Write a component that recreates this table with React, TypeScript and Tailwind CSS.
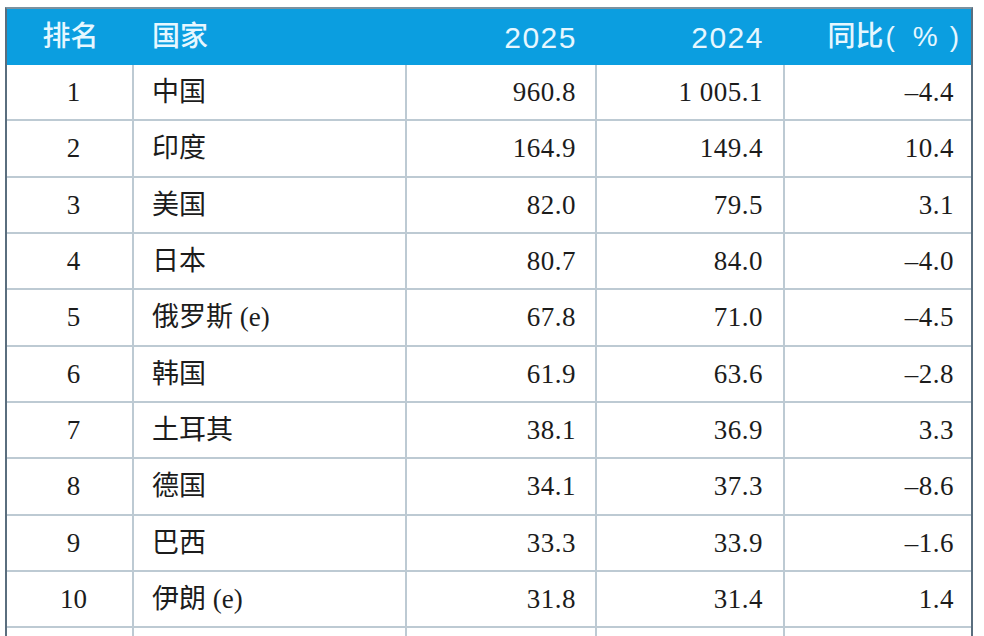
import React from "react";

const rows: [string, string, string, string, string][] = [
  ["1", "中国", "960.8", "1 005.1", "–4.4"],
  ["2", "印度", "164.9", "149.4", "10.4"],
  ["3", "美国", "82.0", "79.5", "3.1"],
  ["4", "日本", "80.7", "84.0", "–4.0"],
  ["5", "俄罗斯 (e)", "67.8", "71.0", "–4.5"],
  ["6", "韩国", "61.9", "63.6", "–2.8"],
  ["7", "土耳其", "38.1", "36.9", "3.3"],
  ["8", "德国", "34.1", "37.3", "–8.6"],
  ["9", "巴西", "33.3", "33.9", "–1.6"],
  ["10", "伊朗 (e)", "31.8", "31.4", "1.4"],
  ["", "", "", "", ""],
];

const serif = { fontFamily: '"Liberation Serif", "Noto Sans CJK SC", serif' };
const sans = { fontFamily: '"Liberation Sans", "Noto Sans CJK SC", sans-serif' };

export default function App() {
  return (
    <div className="w-[984px] h-[636px] bg-white overflow-hidden">
      <div className="ml-[5px] mt-[7px] w-[968px] border-l-2 border-r-2 border-t-2 border-l-[#5a6e7e] border-r-[#5a6e7e] border-t-[#7b919f]">
        <div
          className="flex h-[56px] bg-[#0b9ee0] text-[#e6f7ff] text-[28px] font-medium items-center"
          style={sans}
        >
          <div className="w-[127px] shrink-0 flex justify-center">排名</div>
          <div className="w-[273px] shrink-0 pl-[18px]">国家</div>
          <div className="w-[190px] shrink-0 pr-[20px] text-right text-[30px] tracking-[1.5px] font-normal">2025</div>
          <div className="w-[188px] shrink-0 pr-[21px] text-right text-[30px] tracking-[1.5px] font-normal">2024</div>
          <div className="w-[186px] shrink-0 pr-[12px] flex justify-end items-center">
            <span>同比</span>
            <span className="ml-[2px] font-normal">(</span>
            <span className="ml-[18px] font-normal">%</span>
            <span className="ml-[12px] font-normal">)</span>
          </div>
        </div>
        {rows.map((r, i) => (
          <div
            key={i}
            className="flex h-[56.33px] border-b-2 border-[#bdcad3] text-[27px] text-[#1c1c1c] items-stretch"
            style={serif}
          >
            <div className="w-[127px] shrink-0 border-r-2 border-[#bdcad3] flex items-center justify-center pl-[8px]">
              {r[0]}
            </div>
            <div className="w-[273px] shrink-0 border-r-2 border-[#bdcad3] flex items-center pl-[18px]">
              {r[1]}
            </div>
            <div className="w-[190px] shrink-0 border-r-2 border-[#bdcad3] flex items-center justify-end pr-[19px] tracking-[0.5px]">
              {r[2]}
            </div>
            <div className="w-[188px] shrink-0 border-r-2 border-[#bdcad3] flex items-center justify-end pr-[20px] tracking-[0.5px]">
              {r[3]}
            </div>
            <div className="w-[186px] shrink-0 flex items-center justify-end pr-[17px] tracking-[0.5px]">
              {r[4]}
            </div>
          </div>
        ))}
      </div>
    </div>
  );
}
